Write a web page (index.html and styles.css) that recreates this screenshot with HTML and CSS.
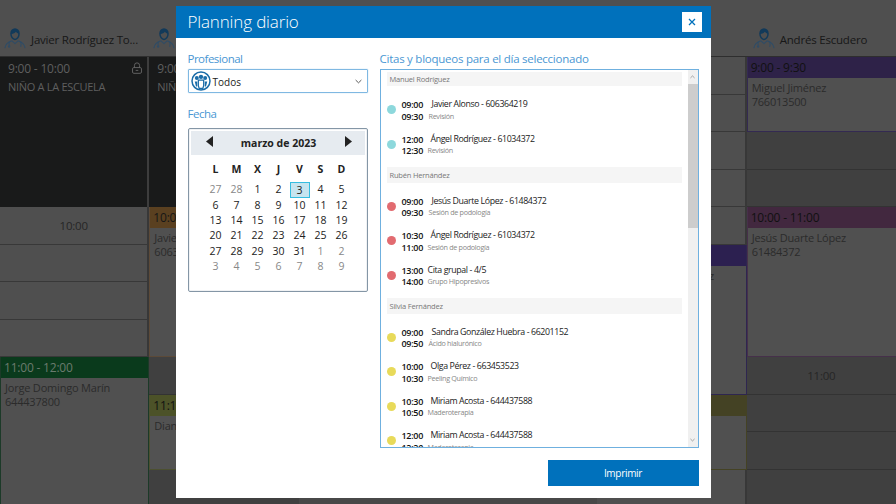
FILE: index.html
```html
<!DOCTYPE html>
<html lang="es">
<head>
<meta charset="utf-8">
<title>Planning diario</title>
<link rel="stylesheet" href="styles.css">
</head>
<body>
<svg class="defs" width="0" height="0" aria-hidden="true">
  <symbol id="doc" viewBox="0 0 24 24">
    <path d="M7.6 6.2c0-3 2-5 4.4-5s4.4 2 4.4 5c0 3.2-1.900 6.300-4.400 6.300S7.600 9.400 7.600 6.200z" fill="none" stroke="#123a5a" stroke-width="1.600"/>
    <path d="M7.600 6.400c2.200.2 4-.6 5.400-2.200.7 1 1.900 1.800 3.400 2.100.2-3.200-1.800-5.100-4.400-5.100S7.400 3.200 7.600 6.400z" fill="#123a5a"/>
    <path d="M1 22c.6-4.400 3.600-6.700 7.600-8l3.400 3 3.400-3c4 1.300 7 3.600 7.600 8" fill="none" stroke="#2f4c66" stroke-width="1.200"/>
    <path d="M6 15c-.6 1.500-.6 3-.3 4.500M18 15c.8 1.500.8 3.500.2 5.500" fill="none" stroke="#2f4c66" stroke-width="1.100"/>
    <circle cx="5.600" cy="20.300" r="1.300" fill="#2f4c66"/>
  </symbol>
</svg>

<div class="schedule">
  <div class="head c1"><svg class="doc"><use href="#doc"/></svg><span>Javier Rodríguez To...</span></div>
  <div class="head c2"><svg class="doc"><use href="#doc"/></svg></div>
  <div class="head c3"></div>
  <div class="head c4"></div>
  <div class="head c5"></div>
  <div class="head c6"><svg class="doc"><use href="#doc"/></svg><span>Andrés Escudero</span></div>

  <div class="block c1 r1-4">
    <div class="block-time">9:00 - 10:00</div>
    <div>NIÑO A LA ESCUELA</div>
    <svg class="lock" viewBox="0 0 14 14"><path d="M4 6.500V4a3 3 0 0 1 6 0v2.500" fill="none" stroke="#6c6c6c"/><rect x="1.800" y="6.500" width="10.400" height="6.700" rx="1.500" fill="none" stroke="#6c6c6c"/><path d="M5.500 9.800h3" stroke="#6c6c6c"/></svg>
  </div>
  <div class="block c2 r1-4"><div class="block-time">9:00 - 10:00</div><div>NIÑO A LA ESCUELA</div></div>

  <div class="slot c1 r5 label">10:00</div>
  <div class="slot c1 r6"></div>
  <div class="slot c1 r7"></div>
  <div class="slot c1 r8"></div>
  <div class="appt green c1 r9-12"><div class="appt-head">11:00 - 12:00</div><div class="appt-body">Jorge Domingo Marín<br>644437800</div></div>

  <div class="appt orange c2 r5-8"><div class="appt-head">10:00 - 11:00</div><div class="appt-body">Javier Alonso<br>606364219</div></div>
  <div class="slot dark c2 r9"></div>
  <div class="appt olive c2 r10-11"><div class="appt-head">11:15 - 11:45</div><div class="appt-body">Diana</div></div>
  <div class="slot dark c2 r12"></div>

  <div class="slot c5 r1"></div>
  <div class="slot c5 r2"></div>
  <div class="slot c5 r3"></div>
  <div class="slot c5 r4"></div>
  <div class="slot c5 r5"></div>
  <div class="appt purple c5 r6-9"><div class="appt-head">10:15 - 11:15</div><div class="appt-body">Rosa María Ruiz Pérez</div></div>
  <div class="appt yellow c5 r10-11"><div class="appt-head">11:15 - 11:45</div><div class="appt-body"></div></div>
  <div class="slot c5 r12"></div>

  <div class="appt violet c6 r1-2"><div class="appt-head">9:00 - 9:30</div><div class="appt-body">Miguel Jiménez<br>766013500</div></div>
  <div class="slot dark c6 r3"></div>
  <div class="slot dark c6 r4"></div>
  <div class="appt pink c6 r5-8"><div class="appt-head">10:00 - 11:00</div><div class="appt-body">Jesús Duarte López<br>61484372</div></div>
  <div class="slot dark c6 r9 label">11:00</div>
  <div class="slot dark c6 r10"></div>
  <div class="slot dark c6 r11"></div>
  <div class="slot dark c6 r12"></div>
</div>

<div class="overlay">
  <div class="modal">
    <header class="modal-head">
      <h1>Planning diario</h1>
      <button class="close" aria-label="Cerrar"><svg viewBox="0 0 8 8"><path d="M1 1l6 6M7 1L1 7" stroke="#0071bc" stroke-width="1.300"/></svg></button>
    </header>
    <div class="modal-body">
      <div class="left">
        <div class="field-label">Profesional</div>
        <div class="select">
          <svg class="team" viewBox="0 0 24 24">
            <circle cx="12" cy="12" r="10.800" fill="#fff" stroke="#1a6ca8" stroke-width="1.800"/>
            <circle cx="7" cy="8.500" r="2.400" fill="#1a6ca8"/><circle cx="17" cy="8.500" r="2.400" fill="#1a6ca8"/><circle cx="12" cy="7" r="2.600" fill="#1a6ca8"/>
            <path d="M4.500 12.500h3v6h-1.500zM19.500 12.500h-3v6h1.500z" fill="#1a6ca8"/>
            <path d="M8.800 11h6.400v6.500l-1 3.300H9.800l-1-3.300z" fill="none" stroke="#1a6ca8" stroke-width="1.500"/>
          </svg>
          <span class="select-text">Todos</span>
          <svg class="chev" viewBox="0 0 8 5"><path d="M.7.8L4 4l3.300-3.200" fill="none" stroke="#444" stroke-width="1"/></svg>
        </div>
        <div class="field-label second">Fecha</div>
        <div class="calendar">
          <div class="cal-head">
            <svg class="arrow" viewBox="0 0 7 11"><path d="M7 0v11L0 5.500z" fill="#222"/></svg>
            <span>marzo de 2023</span>
            <svg class="arrow" viewBox="0 0 7 11"><path d="M0 0v11l7-5.500z" fill="#222"/></svg>
          </div>
          <div class="cal-grid">
            <b>L</b><b>M</b><b>X</b><b>J</b><b>V</b><b>S</b><b>D</b>
            <i>27</i><i>28</i><span>1</span><span>2</span><span class="today">3</span><span>4</span><span>5</span>
            <span>6</span><span>7</span><span>8</span><span>9</span><span>10</span><span>11</span><span>12</span>
            <span>13</span><span>14</span><span>15</span><span>16</span><span>17</span><span>18</span><span>19</span>
            <span>20</span><span>21</span><span>22</span><span>23</span><span>24</span><span>25</span><span>26</span>
            <span>27</span><span>28</span><span>29</span><span>30</span><span>31</span><i>1</i><i>2</i>
            <i>3</i><i>4</i><i>5</i><i>6</i><i>7</i><i>8</i><i>9</i>
          </div>
        </div>
      </div>
      <div class="right">
        <div class="field-label wide">Citas y bloqueos para el día seleccionado</div>
        <div class="list-box">
          <div class="list">
            <div class="group first">Manuel Rodríguez</div>
            <div class="item"><span class="dot teal"></span><div class="times">09:00<br>09:30</div><div class="info"><div class="who in1">Javier Alonso - 606364219</div><div class="what in1">Revisión</div></div></div>
            <div class="item"><span class="dot teal"></span><div class="times">12:00<br>12:30</div><div class="info"><div class="who">Ángel Rodríguez - 61034372</div><div class="what">Revisión</div></div></div>
            <div class="group">Rubén Hernández</div>
            <div class="item"><span class="dot red"></span><div class="times">09:00<br>09:30</div><div class="info"><div class="who in1">Jesús Duarte López - 61484372</div><div class="what in1">Sesión de podología</div></div></div>
            <div class="item"><span class="dot red"></span><div class="times">10:30<br>11:00</div><div class="info"><div class="who">Ángel Rodríguez - 61034372</div><div class="what">Sesión de podología</div></div></div>
            <div class="item"><span class="dot red"></span><div class="times">13:00<br>14:00</div><div class="info"><div class="who plain">Cita grupal - 4/5</div><div class="what">Grupo Hipopresivos</div></div></div>
            <div class="group">Silvia Fernández</div>
            <div class="item"><span class="dot yel"></span><div class="times">09:00<br>09:50</div><div class="info"><div class="who in1">Sandra González Huebra - 66201152</div><div class="what in1">Ácido hialurónico</div></div></div>
            <div class="item"><span class="dot yel"></span><div class="times">10:00<br>10:30</div><div class="info"><div class="who">Olga Pérez - 663453523</div><div class="what">Peeling Químico</div></div></div>
            <div class="item"><span class="dot yel"></span><div class="times">10:30<br>10:50</div><div class="info"><div class="who">Miriam Acosta - 644437588</div><div class="what">Maderoterapia</div></div></div>
            <div class="item"><span class="dot yel"></span><div class="times">12:00<br>12:20</div><div class="info"><div class="who">Miriam Acosta - 644437588</div><div class="what">Maderoterapia</div></div></div>
          </div>
          <div class="scrollbar">
            <svg class="sb-arrow" viewBox="0 0 8 5"><path d="M.7 4L4 .8 7.300 4" fill="none" stroke="#777"/></svg>
            <div class="thumb"></div>
            <div class="track"></div>
            <svg class="sb-arrow" viewBox="0 0 8 5"><path d="M.7.8L4 4 7.300.8" fill="none" stroke="#777"/></svg>
          </div>
        </div>
        <div class="actions"><button class="print">Imprimir</button></div>
      </div>
    </div>
  </div>
</div>
</body>
</html>
```
FILE: styles.css
```css
* { box-sizing: border-box; }
html, body { margin: 0; height: 100%; overflow: hidden; }
body { font-family: "Open Sans", "Noto Sans", sans-serif; background: #4f4f4f; color: #222; position: relative; }
.defs { position: absolute; }

/* background schedule */
.schedule {
  display: grid;
  grid-template-columns: repeat(6, minmax(0, 1fr));
  grid-template-rows: 57px repeat(12, 37.5px);
  height: 504px;
  overflow: hidden;
  background: #484848;
}
.c1 { grid-column: 1; } .c2 { grid-column: 2; } .c3 { grid-column: 3; }
.c4 { grid-column: 4; } .c5 { grid-column: 5; } .c6 { grid-column: 6; }
.r1 { grid-row: 2; } .r2 { grid-row: 3; } .r3 { grid-row: 4; } .r4 { grid-row: 5; }
.r5 { grid-row: 6; } .r6 { grid-row: 7; } .r7 { grid-row: 8; } .r8 { grid-row: 9; }
.r9 { grid-row: 10; } .r10 { grid-row: 11; } .r11 { grid-row: 12; } .r12 { grid-row: 13; }
.r1-2 { grid-row: 2 / 4; } .r1-4 { grid-row: 2 / 6; } .r5-8 { grid-row: 6 / 10; }
.r6-9 { grid-row: 7 / 11; } .r9-12 { grid-row: 10 / 14; } .r10-11 { grid-row: 11 / 13; }
.head {
  grid-row: 1;
  background: #4f4f4f;
  border-bottom: 1px solid #2e2e2e;
  display: flex;
  align-items: center;
  gap: 5px;
  padding: 22px 0 0 4px;
  font-size: 11.5px;
  letter-spacing: -.2px;
  color: #171717;
  white-space: nowrap;
}
.head.c6 { padding-left: 6px; }
.doc { width: 22px; height: 24px; flex: none; }
.block {
  position: relative;
  background: #191a1a;
  border-right: 2px solid #3d3d3d;
  padding: 3px 8px;
  color: #5f5f5f;
  font-size: 11px;
  letter-spacing: -.3px;
  line-height: 18px;
}
.block-time { font-size: 12px; letter-spacing: -.2px; line-height: 18px; }
.lock { position: absolute; right: 4px; top: 5px; width: 12px; height: 12px; }
.slot {
  background: #4f4f4f;
  border-right: 2px solid #383838;
  border-bottom: 1px solid #383838;
  display: flex;
  align-items: center;
  justify-content: center;
}
.slot.dark { background: #404040; border-color: #333; border-right: 0; }
.label { font-size: 11.5px; letter-spacing: -.2px; color: #262626; }
.appt { border: 1px solid; border-top: 0; display: flex; flex-direction: column; background: #505050; overflow: hidden; white-space: nowrap; }
.appt-head { height: 21px; padding: 1px 4px 0 4px; font-size: 12px; letter-spacing: -.2px; line-height: 20px; margin: 0 -1px; flex: none; }
.appt-body { padding: 3px 4px; font-size: 11px; letter-spacing: -.2px; line-height: 13.5px; color: #2b2b2b; }
.green { border-color: #1c3a28; } .green .appt-head { background: #0a3a1c; color: #6a7a6e; }
.orange { border-color: #5c4a38; } .orange .appt-head { background: #5a4020; color: #161616; }
.olive { border-color: #4c5030; background: #525252; } .olive .appt-head { background: #4c5228; color: #111; }
.purple { border-color: #2e2650; } .purple .appt-head { background: #2c2050; color: #777; }
.purple .appt-body { padding-left: 7px; }
.yellow { border-color: #444224; } .yellow .appt-head { background: #444224; }
.violet { border-color: #342a52; border-right: 0; } .violet .appt-head { background: #2e2248; color: #111; }
.pink { border-color: #46304a; border-right: 0; } .pink .appt-head { background: #42283f; color: #111; }

/* modal */
.overlay { position: absolute; inset: 0; display: flex; justify-content: center; padding: 6px 9px 6px 0; pointer-events: none; }
.modal { width: 535px; height: 492px; background: #fff; display: flex; flex-direction: column; margin-left: -1px; pointer-events: auto; }
.modal-head { height: 32px; background: #0071bc; display: flex; align-items: center; justify-content: space-between; padding: 0 9px 0 12px; flex: none; }
.modal-head h1 { margin: 0; font-size: 17px; font-weight: 300; color: #fff; line-height: 32px; letter-spacing: -.15px; }
.close { width: 20px; height: 20px; padding: 6px; border: 0; background: #fff; display: block; }
.close svg { display: block; width: 8px; height: 8px; }
.modal-body { flex: 1; display: flex; padding: 13px 12px 12px 12px; gap: 12px; min-height: 0; }
.left { width: 180px; flex: none; }
.right { flex: 1; min-width: 0; display: flex; flex-direction: column; }
.field-label { font-size: 11.5px; letter-spacing: -.5px; line-height: 16px; color: #4a97d3; height: 18px; }
.field-label.wide { letter-spacing: -.25px; }
.second { margin-top: 13px; }
.select { height: 24px; border: 1px solid #7fb8e2; border-radius: 1px; display: flex; align-items: center; padding: 0 4px 0 2px; box-shadow: 0 0 1px #7fb8e2; }
.team { width: 20px; height: 20px; flex: none; }
.select-text { font-size: 10px; margin-left: 2px; padding-top: 1px; flex: 1; color: #222; }
.chev { width: 7px; height: 5px; margin-right: 1px; }
.calendar { height: 164px; border: 1px solid #8496a6; border-radius: 2px; padding: 2px; margin-top: 4px; box-shadow: inset 0 0 0 1px #f0f2f4; background: #fff; }
.cal-head { height: 24px; background: #e6ebf0; display: flex; align-items: center; justify-content: space-between; padding: 0 13px 0 15px; font-size: 10.5px; font-weight: 700; color: #222; }
.arrow { width: 7px; height: 11px; margin-top: -3px; }
.cal-grid { display: grid; grid-template-columns: repeat(7, 21px); grid-template-rows: 24px repeat(6, 15.4px); padding-left: 14.5px; margin-top: 3px; justify-items: center; align-items: center; font-size: 10.5px; line-height: 15px; color: #222; }
.cal-grid b { font-weight: 700; line-height: 22px; align-self: start; }
.cal-grid span, .cal-grid i { text-align: center; font-style: normal; }
.cal-grid i { color: #888; }
.cal-grid .today { width: 20px; height: 16px; background: #c6e4ef; border: 1px solid #35bde0; line-height: 14px; }

.list-box { height: 379px; border: 1px solid #6fb0df; display: flex; overflow: hidden; flex: none; }
.list { flex: 1; min-width: 0; padding: 2px 6px 0 6px; overflow: hidden; }
.group { height: 15.5px; background: #f5f5f5; font-size: 7.5px; letter-spacing: -.2px; line-height: 15.5px; padding-top: 1px; color: #777; padding-left: 3px; }
.group.first { height: 14px; line-height: 13px; }
.item { height: 34.5px; display: flex; align-items: center; }
.group + .item { margin-top: 6.5px; }
.item + .group { margin-top: 5.5px; }
.dot { width: 9px; height: 9px; border-radius: 50%; flex: none; margin-right: 6px; }
.teal { background: #8dd8dc; } .red { background: #e26b70; } .yel { background: #e8da5a; }
.times { font-size: 9px; letter-spacing: -.3px; line-height: 11.5px; font-weight: 600; color: #111; width: 26px; flex: none; margin-top: 2px; }
.info { line-height: 11.5px; white-space: nowrap; margin-top: 2px; }
.who { font-size: 8.8px; letter-spacing: -.38px; color: #222; padding-left: 3px; }
.who.in1 { padding-left: 4px; }
.who.plain { padding-left: 0; }
.what { font-size: 7.2px; letter-spacing: -.3px; color: #888; }
.what.in1 { padding-left: 1px; }
.scrollbar { width: 10px; background: #f0f0f0; display: flex; flex-direction: column; flex: none; }
.sb-arrow { width: 5px; height: 4px; margin: 5px auto; flex: none; }
.thumb { height: 144px; background: #cdcdcd; flex: none; }
.track { flex: 1; }
.actions { display: flex; justify-content: flex-end; margin-top: 12px; }
.print { width: 151px; height: 26px; background: #0071bc; color: #fff; border: 0; font: 10px "Open Sans", sans-serif; letter-spacing: -.3px; }
```
